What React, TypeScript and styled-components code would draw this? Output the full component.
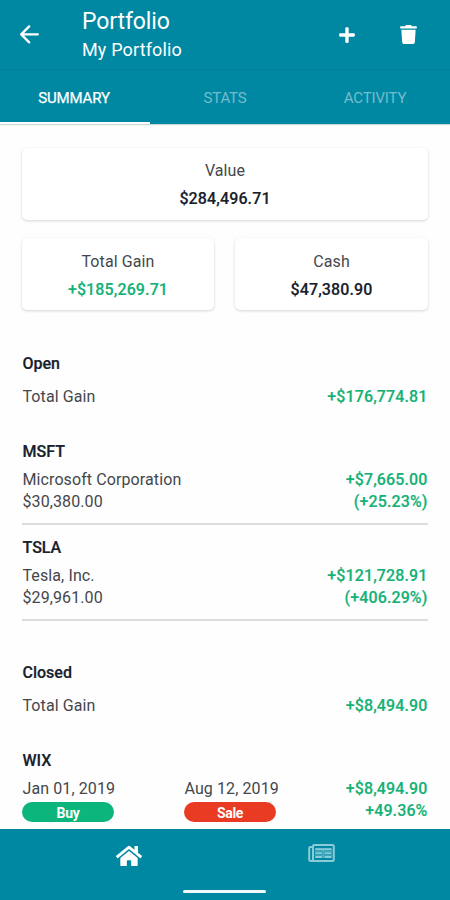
import React from "react";
import styled, { createGlobalStyle } from "styled-components";
import { FaHome, FaPlus, FaTrash } from "react-icons/fa";

const teal = "#0088a3";
const green = "#13b175";
const ink = "#17202c";

const GlobalStyle = createGlobalStyle`
  * { box-sizing: border-box; }
  body { margin: 0; background: #fefefe; }
`;

const Screen = styled.div`
  width: 450px;
  height: 900px;
  display: flex;
  flex-direction: column;
  overflow: hidden;
  background: #fefefe;
  color: #44474c;
  font: 400 16px/22px Roboto, sans-serif;
  letter-spacing: 0.1px;
`;

const Header = styled.header`
  height: 70px;
  flex: none;
  display: flex;
  align-items: flex-start;
  padding: 0 32px 0 19px;
  background: ${teal};
  color: #fff;
  border-bottom: 1px solid #047f9a;
`;

const BackButton = styled.button`
  width: 63px;
  padding: 24px 0 0;
  border: 0;
  background: none;
  color: inherit;
  text-align: left;
  svg { display: block; }
`;

const Titles = styled.div`
  flex: 1;
  padding-top: 6px;
`;

const Title = styled.h1`
  margin: 0;
  font-size: 23px;
  line-height: 31px;
  font-weight: 400;
  letter-spacing: -0.1px;
`;

const Subtitle = styled.div`
  font-size: 18px;
  line-height: 26px;
  letter-spacing: 0.15px;
`;

const Actions = styled.div`
  display: flex;
  align-items: center;
  gap: 43px;
  padding-top: 25px;
  svg { display: block; }
`;

const Tabs = styled.nav`
  height: 54px;
  flex: none;
  display: grid;
  grid-template-columns: repeat(3, 1fr);
  background: ${teal};
  box-shadow: 0 1px 1px rgba(0, 60, 80, 0.2);
`;

const Tab = styled.div<{ $active?: boolean }>`
  display: flex;
  align-items: center;
  justify-content: center;
  font-size: 15px;
  letter-spacing: -0.15px;
  padding: 4px ${(p) => (p.$active ? 2 : 0)}px 0 0;
  color: ${(p) => (p.$active ? "#fff" : "#74bccb")};
  border-bottom: 2px solid ${(p) => (p.$active ? "#fff" : "transparent")};
  -webkit-text-stroke: ${(p) => (p.$active ? "0.25px #fff" : "0")};
`;

const Content = styled.main`
  flex: 1;
  min-height: 0;
  overflow: hidden;
  padding: 24px 22px 0;
`;

const Cards = styled.section`
  display: grid;
  grid-template-columns: 192px 193px;
  justify-content: space-between;
  row-gap: 18px;
`;

const Card = styled.div<{ $wide?: boolean }>`
  grid-column: ${(p) => (p.$wide ? "1 / -1" : "auto")};
  height: 72px;
  padding-top: ${(p) => (p.$wide ? 9 : 10)}px;
  display: flex;
  flex-direction: column;
  align-items: center;
  line-height: 28px;
  background: #fff;
  border-radius: 5px;
  box-shadow: 0 1px 3px rgba(0, 0, 0, 0.17);
`;

const Amount = styled.span<{ $gain?: boolean }>`
  font-weight: 500;
  letter-spacing: 0.12px;
  color: ${(p) => (p.$gain ? green : ink)};
  -webkit-text-stroke: 0.15px currentColor;
`;

const Section = styled.section<{ $gap: number }>`
  padding-top: ${(p) => p.$gap}px;
`;

const Heading = styled.h2`
  margin: 0 0 0 0.5px;
  font-size: 16px;
  line-height: 22px;
  font-weight: 500;
  letter-spacing: 0;
  color: ${ink};
  -webkit-text-stroke: 0.2px currentColor;
`;

const Row = styled.div`
  display: flex;
  justify-content: space-between;
  margin: 0 0.5px;
`;

const TotalRow = styled(Row)`
  padding-top: 11px;
`;

const Gains = styled.div`
  display: flex;
  flex-direction: column;
  align-items: flex-end;
`;

const Position = styled.article<{ $gap: number; $line?: boolean }>`
  margin: 0;
  padding: ${(p) => p.$gap}px 0 ${(p) => (p.$line ? 10 : 0)}px;
  border-bottom: ${(p) => (p.$line ? "2px solid #dcddde" : "0")};
  ${Heading} { margin-bottom: 6px; }
`;

const Trades = styled.div`
  display: grid;
  grid-template-columns: 162px 1fr auto;
  margin: 0 0.5px;
`;

const Pill = styled.div<{ $color: string }>`
  width: 92px;
  height: 20px;
  margin: 2px 0 0 -0.5px;
  border-radius: 10px;
  background: ${(p) => p.$color};
  color: #fff;
  text-align: center;
  font-size: 14px;
  line-height: 22px;
  font-weight: 700;
  letter-spacing: -0.3px;
`;

const BottomBar = styled.footer`
  height: 71px;
  flex: none;
  background: ${teal};
  display: flex;
  flex-direction: column;
  align-items: center;
`;

const BottomTabs = styled.div`
  width: 386px;
  height: 61px;
  display: grid;
  grid-template-columns: 1fr 1fr;
  justify-items: center;
  align-items: start;
  padding-top: 14px;
  color: #fff;
`;

const NewsIcon = styled.svg`
  color: #8bcbd8;
  margin-top: 1px;
`;

const HomeIndicator = styled.div`
  width: 83px;
  height: 3px;
  margin-right: 1px;
  border-radius: 2px;
  background: #f2fafb;
`;

const holdings = [
  { ticker: "MSFT", name: "Microsoft Corporation", value: "$30,380.00", gain: "+$7,665.00", pct: "(+25.23%)", gap: 33 },
  { ticker: "TSLA", name: "Tesla, Inc.", value: "$29,961.00", gain: "+$121,728.91", pct: "(+406.29%)", gap: 12 },
];

export default function App() {
  return (
    <>
      <GlobalStyle />
      <Screen>
        <Header>
          <BackButton aria-label="Back">
            <svg width="21" height="21" viewBox="0 0 21 21" fill="none" stroke="currentColor" strokeWidth="2.3" strokeLinecap="round" strokeLinejoin="round">
              <path d="M10.2 2.4 2.2 10.4l8 8M2.4 10.4H18.8" />
            </svg>
          </BackButton>
          <Titles>
            <Title>Portfolio</Title>
            <Subtitle>My Portfolio</Subtitle>
          </Titles>
          <Actions>
            <FaPlus size={18} />
            <FaTrash size={19} />
          </Actions>
        </Header>
        <Tabs>
          <Tab $active>SUMMARY</Tab>
          <Tab>STATS</Tab>
          <Tab>ACTIVITY</Tab>
        </Tabs>
        <Content>
          <Cards>
            <Card $wide>
              <span>Value</span>
              <Amount>$284,496.71</Amount>
            </Card>
            <Card>
              <span>Total Gain</span>
              <Amount $gain>+$185,269.71</Amount>
            </Card>
            <Card>
              <span>Cash</span>
              <Amount>$47,380.90</Amount>
            </Card>
          </Cards>
          <Section $gap={43}>
            <Heading>Open</Heading>
            <TotalRow>
              <span>Total Gain</span>
              <Amount $gain>+$176,774.81</Amount>
            </TotalRow>
            {holdings.map((h) => (
              <Position key={h.ticker} $gap={h.gap} $line>
                <Heading>{h.ticker}</Heading>
                <Row>
                  <div>
                    <div>{h.name}</div>
                    <div>{h.value}</div>
                  </div>
                  <Gains>
                    <Amount $gain>{h.gain}</Amount>
                    <Amount $gain>{h.pct}</Amount>
                  </Gains>
                </Row>
              </Position>
            ))}
          </Section>
          <Section $gap={41}>
            <Heading>Closed</Heading>
            <TotalRow>
              <span>Total Gain</span>
              <Amount $gain>+$8,494.90</Amount>
            </TotalRow>
            <Position $gap={33}>
              <Heading>WIX</Heading>
              <Trades>
                <div>
                  <div>Jan 01, 2019</div>
                  <Pill $color="#0bb57b">Buy</Pill>
                </div>
                <div>
                  <div>Aug 12, 2019</div>
                  <Pill $color="#e93b23">Sale</Pill>
                </div>
                <Gains>
                  <Amount $gain>+$8,494.90</Amount>
                  <Amount $gain>+49.36%</Amount>
                </Gains>
              </Trades>
            </Position>
          </Section>
        </Content>
        <BottomBar>
          <BottomTabs>
            <FaHome size={26} />
            <NewsIcon width="27" height="18" viewBox="0 0 27 18" fill="none" stroke="currentColor">
              <path strokeWidth="2" d="M5 3H2.2Q1.2 3 1.2 4v11.3Q1.2 17 2.8 17H24.3Q25.8 17 25.8 15.5V2.2Q25.8 1.1 24.6 1.1H6.2Q5 1.1 5 2.2v13.2Q5 17 3.2 17" />
              <path strokeWidth="2" d="M7.2 5.2H23.6" />
              <path strokeWidth="1.8" d="M7.2 9.2H14.2M16.4 9.2H23.6M7.2 13H14.2M16.4 13H23.6" />
              <path strokeWidth="1.3" strokeOpacity="0.6" d="M15.3 6V14M6.5 7.2H24.5M6.5 11.1H24.5" />
            </NewsIcon>
          </BottomTabs>
          <HomeIndicator />
        </BottomBar>
      </Screen>
    </>
  );
}
